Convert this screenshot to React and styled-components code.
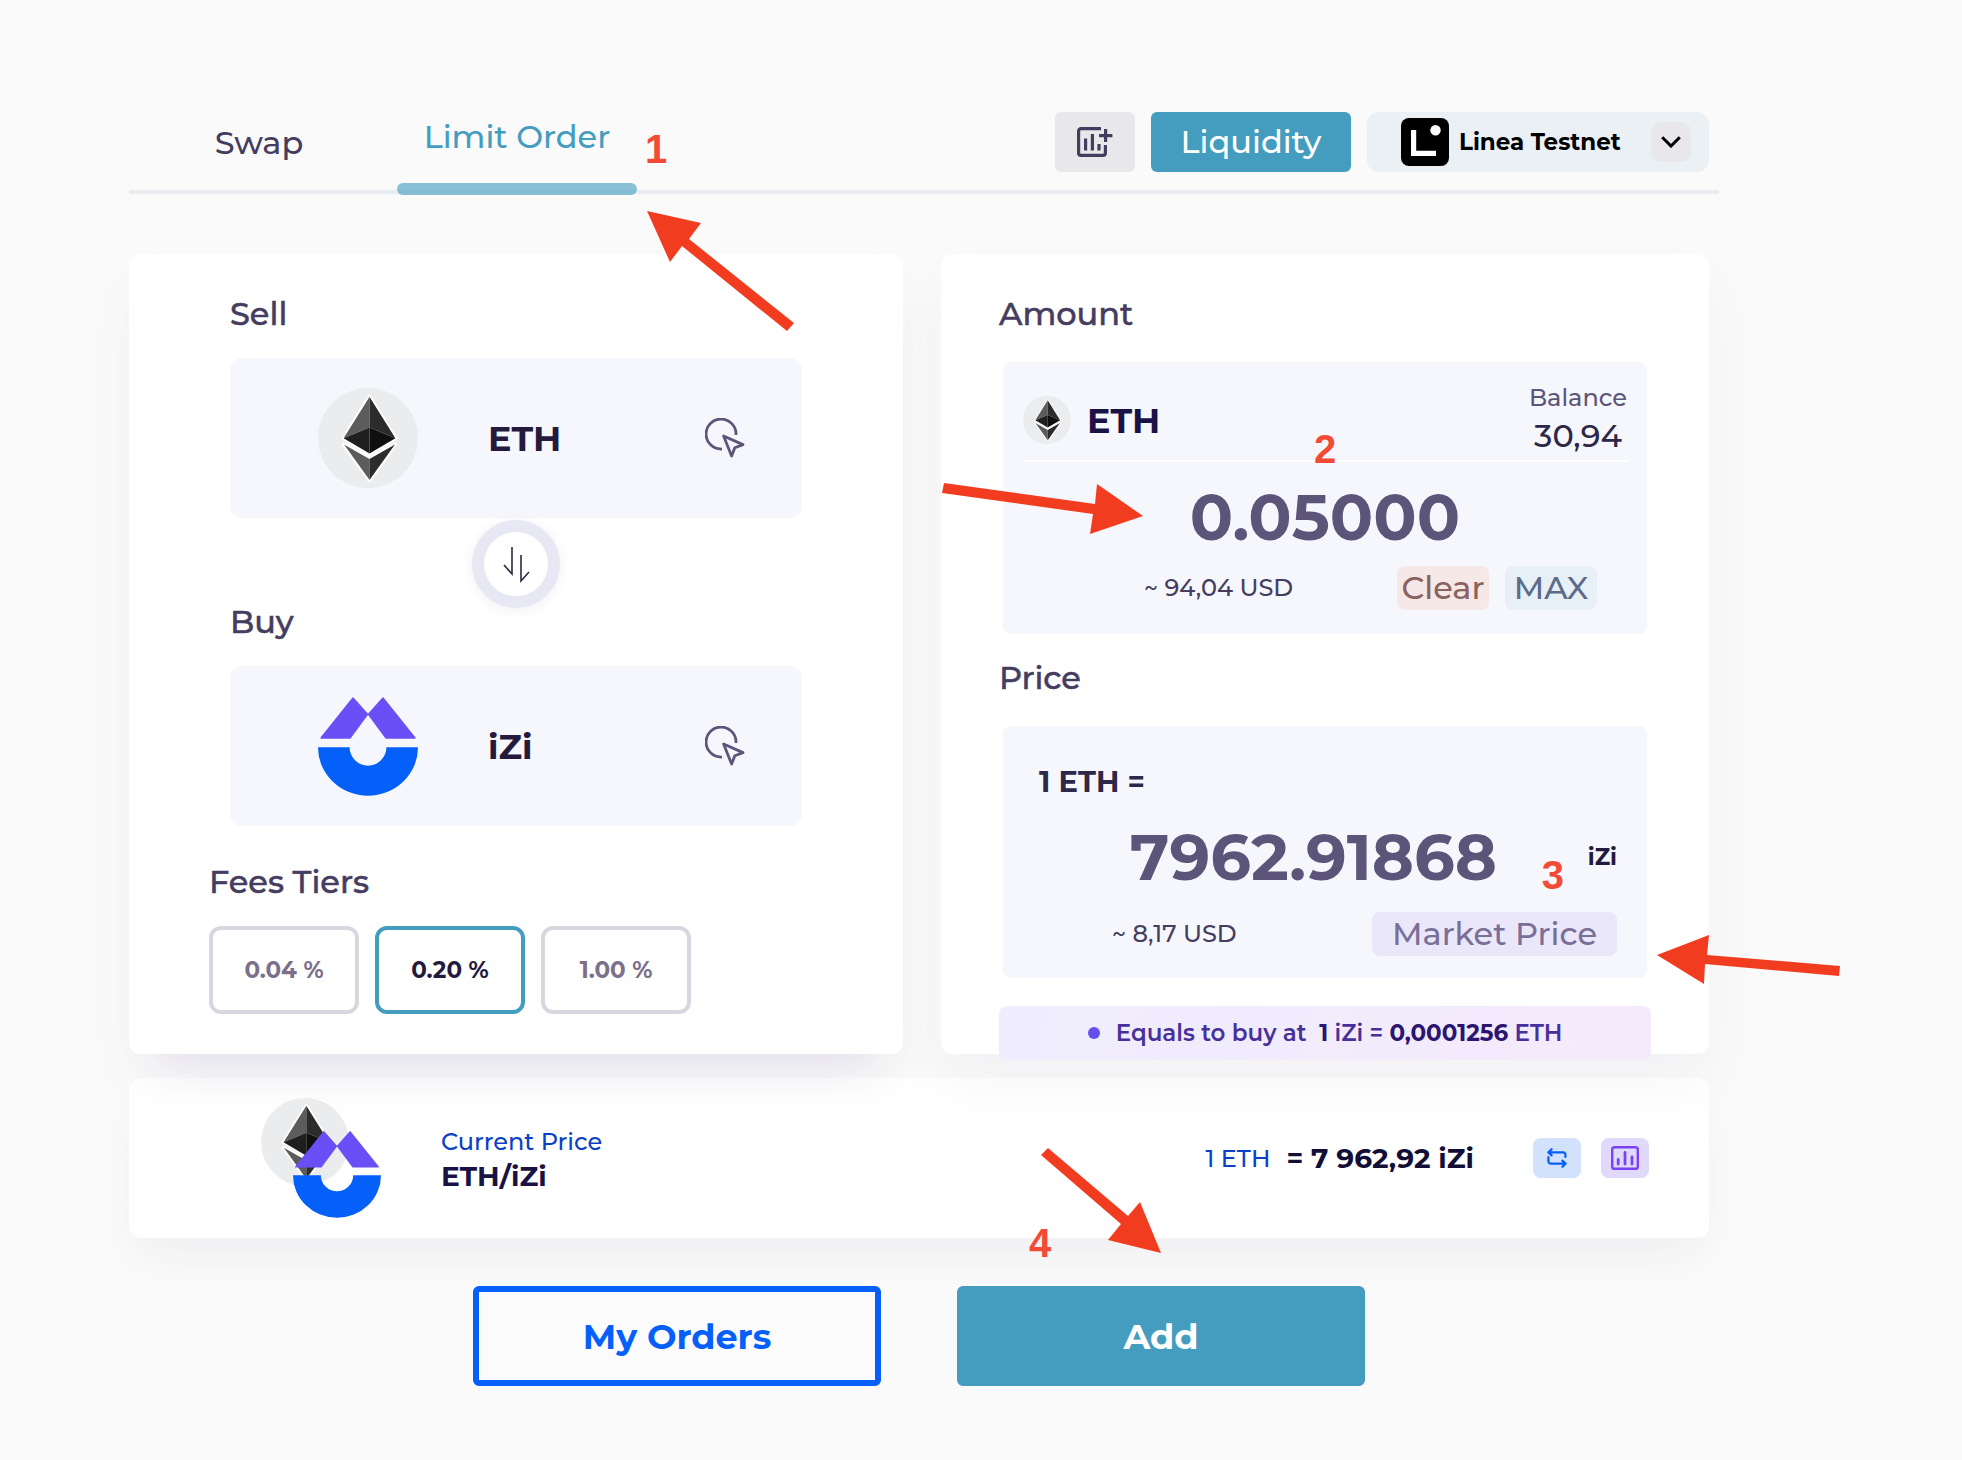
import React, { useState } from "react";
import styled, { createGlobalStyle, css } from "styled-components";

const color = {
  page: "#fafafa",
  ink: "#231a3d",
  label: "#453d5f",
  muted: "#5d5579",
  teal: "#449dbf",
  blue: "#0560fa",
  link: "#0a3fc8",
  field: "#f6f7fc",
  red: "#f13c1f",
};

const GlobalStyle = createGlobalStyle`
  *, *::before, *::after { box-sizing: border-box; }
  body {
    margin: 0;
    background: ${color.page};
    color: ${color.ink};
    font-family: Montserrat, Inter, "Open Sans", sans-serif;
    font-weight: 500;
    overflow-x: hidden;
  }
  button, input, select { font: inherit; color: inherit; margin: 0; }
  button { border: 0; padding: 0; background: none; cursor: pointer; }
  svg { display: block; flex: none; }
`;

const Page = styled.main`
  padding: 112px 253px 74px 129px;
`;

const Header = styled.header`
  display: flex;
  justify-content: space-between;
  align-items: stretch;
  height: 82px;
  margin: 0 -10px 60px 0;
  padding-right: 10px;
  border-bottom: 4px solid #e9ecf1;
`;

const Tabs = styled.nav`
  display: flex;
  gap: 8px;
`;

const TabItem = styled.div`
  position: relative;
  display: flex;
`;

const Tab = styled.button`
  width: ${(p) => (p.$active ? 240 : 260)}px;
  padding-bottom: ${(p) => (p.$active ? 30 : 18)}px;
  font-size: 32px;
  color: ${(p) => (p.$active ? color.teal : color.label)};
  ${(p) =>
    p.$active &&
    css`
      &::after {
        content: "";
        position: absolute;
        left: 0;
        right: 0;
        bottom: -5px;
        height: 12px;
        border-radius: 6px;
        background: rgba(68, 157, 191, 0.62);
      }
    `}
`;

const Actions = styled.div`
  display: flex;
  gap: 16px;
  height: 60px;
`;

const ToolButton = styled.button`
  display: grid;
  place-items: center;
  width: 80px;
  border-radius: 6px;
  background: #e8e8ea;
  color: ${color.label};
`;

const LiquidityButton = styled.button`
  width: 200px;
  padding-bottom: 2px;
  border-radius: 6px;
  background: ${color.teal};
  color: #fff;
  font-size: 32px;
`;

const Network = styled.label`
  position: relative;
  display: flex;
  align-items: center;
  width: 342px;
  padding: 0 18px 0 34px;
  border-radius: 12px;
  background: #ebf0f4;
`;

const NetworkSelect = styled.select`
  flex: 1;
  min-width: 0;
  margin-left: 10px;
  padding: 0;
  border: 0;
  background: transparent;
  appearance: none;
  font-size: 23px;
  line-height: 32px;
  font-weight: 700;
  color: #000;
`;

const Chevron = styled.span`
  display: grid;
  place-items: center;
  width: 40px;
  height: 40px;
  border-radius: 10px;
  background: #e8e8ea;
  pointer-events: none;
`;

const Columns = styled.div`
  display: grid;
  grid-template-columns: minmax(0, 774fr) minmax(0, 768fr);
  gap: 38px;
  margin-bottom: 24px;
`;

const Card = styled.section`
  padding: ${(p) => (p.$wide ? "40px 80px" : "40px 58px 0")};
  border-radius: 12px;
  background: #fff;
  box-shadow: ${(p) =>
    p.$wide
      ? "0 34px 44px -30px rgba(100, 60, 160, 0.12), 0 30px 60px rgba(40, 30, 70, 0.03)"
      : "0 30px 60px rgba(40, 30, 70, 0.04)"};
`;

const Inset = styled.div`
  margin: 0 21px;
`;

const Title = styled.h2`
  margin: ${(p) => p.$top || 0}px 0 ${(p) => p.$bottom || 24}px;
  font-size: 32px;
  line-height: 40px;
  font-weight: 500;
  -webkit-text-stroke: 0.5px ${color.label};
  color: ${color.label};
`;

const TokenButton = styled.button`
  display: flex;
  align-items: center;
  width: 100%;
  height: 160px;
  padding: 0 57px 0 88px;
  border-radius: 12px;
  background: ${color.field};
  color: ${color.muted};
`;

const TokenName = styled.span`
  flex: 1;
  margin-left: 70px;
  text-align: left;
  font-size: 35px;
  font-weight: 700;
  color: ${color.ink};
`;

const FlipButton = styled.button`
  display: block;
  width: 88px;
  height: 88px;
  margin: 2px auto -6px;
  border: 12px solid #e8e8f4;
  border-radius: 50%;
  background: #fff;
  box-shadow: 0 2px 12px rgba(60, 50, 110, 0.08);
  color: #2b2745;
`;

const Tiers = styled.fieldset`
  display: flex;
  gap: 16px;
  margin: 0;
  padding: 0;
  border: 0;
`;

const Tier = styled.label`
  display: grid;
  place-items: center;
  width: 150px;
  height: 88px;
  border: 4px solid #d8d6de;
  border-radius: 12px;
  font-size: 23px;
  font-weight: 700;
  color: #7b6f8b;
  cursor: pointer;
  input {
    position: absolute;
    opacity: 0;
    pointer-events: none;
  }
  &:has(input:checked) {
    border-color: ${color.teal};
    color: ${color.ink};
  }
`;

const Box = styled.div`
  position: relative;
  margin: 0 4px;
  padding: ${(p) => p.$pad};
  border-radius: 8px;
  background: ${color.field};
`;

const BoxHead = styled.div`
  display: flex;
  align-items: center;
  border-bottom: 2px solid #fff;
`;

const BoxToken = styled.strong`
  flex: 1;
  margin-left: 16px;
  font-size: 35px;
  font-weight: 700;
  color: #1a1145;
`;

const Balance = styled.div`
  padding-bottom: 4px;
  text-align: center;
  font-size: 24px;
  line-height: 36px;
  color: ${color.muted};
  b {
    display: block;
    font-size: 32px;
    line-height: 40px;
    font-weight: 500;
    color: #2d2748;
  }
`;

const ValueRow = styled.label`
  display: flex;
  align-items: center;
  margin-top: 16px;
`;

const ValueInput = styled.input`
  flex: 1;
  min-width: 0;
  height: 78px;
  padding: 0;
  border: 0;
  outline: 0;
  background: transparent;
  text-align: center;
  font-size: 64px;
  font-weight: 700;
  color: ${color.muted};
`;

const Unit = styled.span`
  font-size: 23px;
  font-weight: 700;
`;

const BoxFoot = styled.div`
  display: flex;
  align-items: center;
  gap: 16px;
  margin-top: ${(p) => p.$top}px;
  padding: ${(p) => p.$pad};
`;

const Fiat = styled.span`
  flex: 1;
  font-size: 24px;
  line-height: 32px;
  color: ${color.label};
`;

const tones = {
  clear: ["#f5e8e6", "#8a625f"],
  max: ["#e7eff7", "#5b6b88"],
  market: ["#eae7fb", "#7a6f97"],
};

const Chip = styled.button`
  width: ${(p) => (p.$tone === "market" ? 245 : 92)}px;
  height: 44px;
  border-radius: 8px;
  background: ${(p) => tones[p.$tone][0]};
  color: ${(p) => tones[p.$tone][1]};
  font-size: 32px;
  line-height: 44px;
`;

const RateLabel = styled.div`
  font-size: 29px;
  line-height: 40px;
  font-weight: 700;
  color: #2d2748;
`;

const Equals = styled.p`
  display: flex;
  align-items: center;
  justify-content: center;
  height: 54px;
  margin: 28px 0 -6px;
  border-radius: 8px;
  background: linear-gradient(100deg, #efedfd, #f4eafc);
  font-size: 23px;
  font-weight: 600;
  white-space: pre;
  color: #48309b;
  &::before {
    content: "";
    width: 12px;
    height: 12px;
    margin-right: 16px;
    border-radius: 50%;
    background: #6350ef;
  }
  b {
    font-weight: 700;
    color: #2a1570;
  }
`;

const Summary = styled.section`
  display: flex;
  align-items: center;
  height: 160px;
  padding: 0 60px 0 132px;
  border-radius: 12px;
  background: rgba(255, 255, 255, 0.86);
  box-shadow: 0 24px 44px -10px rgba(50, 35, 90, 0.06);
`;

const Pair = styled.div`
  display: grid;
  width: 120px;
  height: 120px;
  > * {
    grid-area: 1 / 1;
  }
  > :last-child {
    place-self: end;
  }
`;

const PairText = styled.div`
  flex: 1;
  margin-left: 60px;
  padding-top: 2px;
  font-size: 24px;
  line-height: 34px;
  color: ${color.link};
  b {
    display: block;
    font-size: 28px;
    font-weight: 700;
    color: #1a1145;
  }
`;

const Rate = styled.div`
  display: flex;
  align-items: center;
  gap: 16px;
  margin-right: 59px;
  font-size: 24px;
  color: ${color.link};
  b {
    font-size: 28px;
    font-weight: 700;
    color: #120f36;
  }
`;

const SmallButton = styled.button`
  display: grid;
  place-items: center;
  width: 48px;
  height: 40px;
  border-radius: 8px;
  background: ${(p) => (p.$violet ? "#e0d9fb" : "#d2e1fc")};
  color: ${(p) => (p.$violet ? "#7a42f8" : color.blue)};
  & + & {
    margin-left: 20px;
  }
`;

const Footer = styled.footer`
  display: flex;
  justify-content: center;
  gap: 76px;
  margin-top: 48px;
`;

const FooterItem = styled.div`
  position: relative;
`;

const MainButton = styled.button`
  width: 408px;
  height: 100px;
  border: 6px solid ${(p) => (p.$solid ? color.teal : color.blue)};
  border-radius: 6px;
  background: ${(p) => (p.$solid ? color.teal : "#fbfbfb")};
  color: ${(p) => (p.$solid ? "#fff" : color.blue)};
  font-size: 35px;
  font-weight: 700;
`;

const Step = styled.span`
  position: absolute;
  top: ${(p) => p.$top}px;
  left: ${(p) => (p.$left === undefined ? "auto" : `${p.$left}px`)};
  right: ${(p) => (p.$right === undefined ? "auto" : `${p.$right}px`)};
  z-index: 2;
  font-family: "Liberation Sans", Arial, sans-serif;
  font-size: 40px;
  line-height: 40px;
  font-weight: 700;
  color: #f34a36;
  pointer-events: none;
`;

const ArrowSvg = styled.svg`
  position: absolute;
  top: ${(p) => p.$top}px;
  left: ${(p) => (p.$left === undefined ? "auto" : `${p.$left}px`)};
  right: ${(p) => (p.$right === undefined ? "auto" : `${p.$right}px`)};
  z-index: 2;
  fill: ${color.red};
  pointer-events: none;
`;

function Arrow({ w, h, points, top, left, right }) {
  return (
    <ArrowSvg width={w} height={h} viewBox={`0 0 ${w} ${h}`} $top={top} $left={left} $right={right} aria-hidden="true">
      <polygon points={points} />
    </ArrowSvg>
  );
}

function EthLogo({ size }) {
  return (
    <svg width={size} height={size} viewBox="0 0 100 100" aria-hidden="true">
      <circle cx="50" cy="50" r="50" fill="#ebecee" />
      <path
        d="M51.5 8.7 77.4 50.3 51.5 65.5 25.6 50.3zM26 56.5 51.5 70.5 77 56.5 51.5 92z"
        fill="#fff"
        stroke="#fff"
        strokeWidth="4"
        strokeLinejoin="round"
      />
      <path d="M51.5 8.7V39.5L25.6 50.3z" fill="#5c5c5d" />
      <path d="M51.5 8.7V39.5L77.4 50.3z" fill="#2c2c2d" />
      <path d="M51.5 39.5V65.5L25.6 50.3z" fill="#1f1f20" />
      <path d="M51.5 39.5V65.5L77.4 50.3z" fill="#0f0f10" />
      <path d="M26 56.5 51.5 71V92z" fill="#5c5c5d" />
      <path d="M77 56.5 51.5 71V92z" fill="#2c2c2d" />
    </svg>
  );
}

function IziLogo({ size }) {
  return (
    <svg width={size} height={size} viewBox="0 0 100 100" aria-hidden="true">
      <path
        d="M35 2 49.5 18.3 32 42H3zM65 2 50.5 18.3 68 42H97z"
        fill="#6b4ff6"
        stroke="#6b4ff6"
        strokeWidth="1.4"
        strokeLinejoin="round"
      />
      <path d="M0 51.3H31.6A18.4 18.4 0 0 0 68.4 51.3H100A50 48.5 0 0 1 0 51.3z" fill="#0560fa" />
    </svg>
  );
}

function PickIcon() {
  return (
    <svg width="40" height="40" viewBox="0 0 40 40" fill="none" stroke="currentColor" strokeWidth="2.8" aria-hidden="true">
      <path d="M31 17A15 15 0 1 0 17 31" />
      <path d="M18.6 18 38 26.6 29.8 29.8 26.6 38z" strokeLinejoin="round" />
    </svg>
  );
}

function FlipIcon() {
  return (
    <svg width="64" height="64" viewBox="0 0 64 64" fill="none" stroke="currentColor" strokeWidth="1.6" aria-hidden="true">
      <path d="M28 15V42L20 33M37 23V49L45 40" />
    </svg>
  );
}

function AddChartIcon() {
  return (
    <svg width="36" height="30" viewBox="0 0 36 30" fill="none" stroke="currentColor" strokeWidth="3.2" aria-hidden="true">
      <path d="M24 1.6H4A2.4 2.4 0 0 0 1.6 4V26A2.4 2.4 0 0 0 4 28.4H26A2.4 2.4 0 0 0 28.4 26V18" />
      <path d="M28.6 2V15M22 8.6H35.4M8.6 11.4V23.4M15.4 7V23.4M22 17V23.4" />
    </svg>
  );
}

function LineaLogo() {
  return (
    <svg width="48" height="48" viewBox="0 0 48 48" aria-hidden="true">
      <rect width="48" height="48" rx="8" />
      <path d="M12.6 12V35.4H35" fill="none" stroke="#fff" strokeWidth="5.2" />
      <circle cx="34.5" cy="12.2" r="5.2" fill="#fff" />
    </svg>
  );
}

function ChevronIcon() {
  return (
    <svg width="20" height="12" viewBox="0 0 20 12" fill="none" stroke="#000" strokeWidth="3" aria-hidden="true">
      <path d="M1.2 1.2 10 10 18.8 1.2" />
    </svg>
  );
}

function SwitchIcon() {
  return (
    <svg
      width="20"
      height="20"
      viewBox="0 0 20 20"
      fill="none"
      stroke="currentColor"
      strokeWidth="2.2"
      strokeLinecap="round"
      strokeLinejoin="round"
      aria-hidden="true"
    >
      <path d="M1.6 4.4H16A2.4 2.4 0 0 1 18.4 6.8V9M4.6 1.2 1.4 4.4 4.6 7.4" />
      <path d="M1.4 9V13.2A2.4 2.4 0 0 0 3.8 15.6H18.4M15.4 12.6 18.6 15.6 15.4 18.8" />
    </svg>
  );
}

function ChartIcon() {
  return (
    <svg width="28" height="24" viewBox="0 0 28 24" fill="none" stroke="currentColor" strokeWidth="2.4" aria-hidden="true">
      <rect x="1.2" y="1.2" width="25.6" height="21.6" rx="2.4" />
      <path d="M7.2 13.4V18M14 6.4V18M21 11V18" strokeWidth="2.8" strokeLinecap="round" />
    </svg>
  );
}

const fees = ["0.04 %", "0.20 %", "1.00 %"];

export default function App() {
  const [fee, setFee] = useState("0.20 %");
  const [amount, setAmount] = useState("0.05000");
  const [price, setPrice] = useState("7962.91868");

  return (
    <>
      <GlobalStyle />
      <Page>
        <Header>
          <Tabs>
            <TabItem>
              <Tab type="button">Swap</Tab>
            </TabItem>
            <TabItem>
              <Tab type="button" $active aria-current="page">
                Limit Order
              </Tab>
              <Step $top={17} $left={248}>1</Step>
              <Arrow w={147} h={120} top={99} left={250} points="0,0 54,12 42,28 147,112 140,120 35,35 23,51" />
            </TabItem>
          </Tabs>
          <Actions>
            <ToolButton type="button" aria-label="Add chart">
              <AddChartIcon />
            </ToolButton>
            <LiquidityButton type="button">Liquidity</LiquidityButton>
            <Network>
              <LineaLogo />
              <NetworkSelect aria-label="Network" defaultValue="Linea Testnet">
                <option>Linea Testnet</option>
              </NetworkSelect>
              <Chevron>
                <ChevronIcon />
              </Chevron>
            </Network>
          </Actions>
        </Header>

        <Columns>
          <Card $wide>
            <Inset>
              <Title>Sell</Title>
              <TokenButton type="button">
                <EthLogo size={100} />
                <TokenName>ETH</TokenName>
                <PickIcon />
              </TokenButton>
              <FlipButton type="button" aria-label="Flip tokens">
                <FlipIcon />
              </FlipButton>
              <Title>Buy</Title>
              <TokenButton type="button">
                <IziLogo size={100} />
                <TokenName>iZi</TokenName>
                <PickIcon />
              </TokenButton>
            </Inset>
            <Title $top={36}>Fees Tiers</Title>
            <Tiers aria-label="Fees Tiers">
              {fees.map((f) => (
                <Tier key={f}>
                  <input type="radio" name="fee" checked={fee === f} onChange={() => setFee(f)} />
                  {f}
                </Tier>
              ))}
            </Tiers>
          </Card>

          <Card>
            <Title $bottom={28}>Amount</Title>
            <Box $pad="18px 20px 24px">
              <BoxHead>
                <EthLogo size={48} />
                <BoxToken>ETH</BoxToken>
                <Balance>
                  Balance<b>30,94</b>
                </Balance>
              </BoxHead>
              <ValueRow>
                <ValueInput aria-label="Amount" value={amount} onChange={(e) => setAmount(e.target.value)} />
              </ValueRow>
              <BoxFoot $top={10} $pad="0 30px 0 121px">
                <Fiat>~ 94,04 USD</Fiat>
                <Chip type="button" $tone="clear" onClick={() => setAmount("")}>
                  Clear
                </Chip>
                <Chip type="button" $tone="max" onClick={() => setAmount("30.94")}>
                  MAX
                </Chip>
              </BoxFoot>
              <Step $top={67} $left={311}>2</Step>
              <Arrow w={201} h={51} top={121} left={-61} points="201,33 155,1 153,21 2,0 0,10 151,31 148,51" />
            </Box>

            <Title $top={24} $bottom={28}>
              Price
            </Title>
            <Box $pad="36px 30px 22px 36px">
              <RateLabel>1 ETH =</RateLabel>
              <ValueRow>
                <ValueInput aria-label="Price" value={price} onChange={(e) => setPrice(e.target.value)} />
                <Unit>iZi</Unit>
              </ValueRow>
              <BoxFoot $top={16} $pad="0 0 0 73px">
                <Fiat>~ 8,17 USD</Fiat>
                <Chip type="button" $tone="market">
                  Market Price
                </Chip>
              </BoxFoot>
              <Step $top={129} $right={83}>3</Step>
              <Arrow w={183} h={49} top={209} right={-193} points="0,20 52,0 50,20 183,31 182,41 48,29 47,49" />
            </Box>
            <Equals>
              {"Equals to buy at  "}
              <b>1</b>
              {" iZi = "}
              <b>0,0001256</b>
              {" ETH"}
            </Equals>
          </Card>
        </Columns>

        <Summary>
          <Pair>
            <EthLogo size={88} />
            <IziLogo size={88} />
          </Pair>
          <PairText>
            Current Price<b>ETH/iZi</b>
          </PairText>
          <Rate>
            1 ETH <b>= 7 962,92 iZi</b>
          </Rate>
          <SmallButton type="button" aria-label="Switch direction">
            <SwitchIcon />
          </SmallButton>
          <SmallButton type="button" $violet aria-label="Show chart">
            <ChartIcon />
          </SmallButton>
        </Summary>

        <Footer>
          <FooterItem>
            <MainButton type="button">My Orders</MainButton>
          </FooterItem>
          <FooterItem>
            <MainButton type="button" $solid>
              Add
            </MainButton>
            <Step $top={-63} $left={72}>4</Step>
            <Arrow w={120} h={105} top={-138} left={84} points="120,105 67,92 80,76 0,7 7,0 87,68 99,54" />
          </FooterItem>
        </Footer>
      </Page>
    </>
  );
}
